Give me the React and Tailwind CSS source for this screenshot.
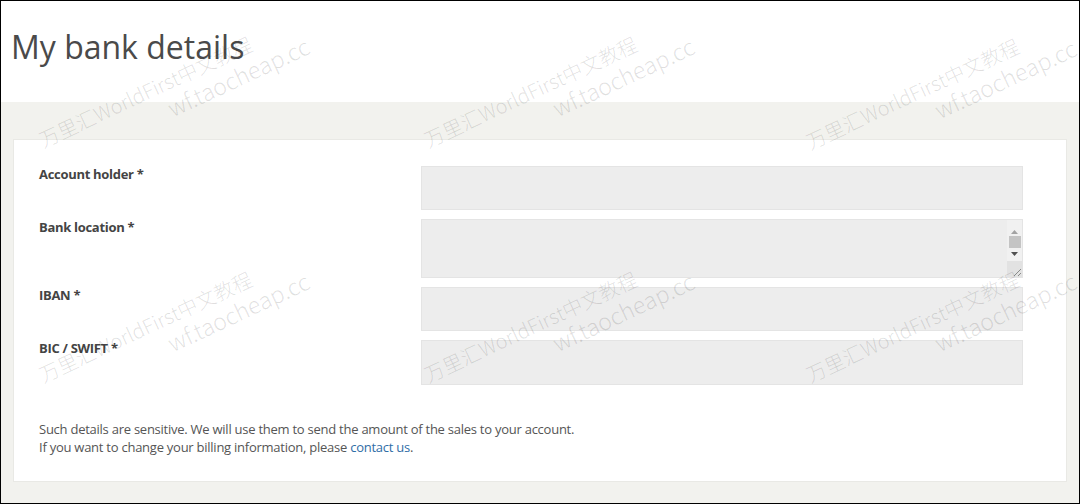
import React from 'react';

const fields = [
  { label: 'Account holder *', multiline: false, height: 'h-[44px]' },
  { label: 'Bank location *', multiline: true, height: 'h-[59px]' },
  { label: 'IBAN *', multiline: false, height: 'h-[44px]' },
  { label: 'BIC / SWIFT *', multiline: false, height: 'h-[45px]' },
];

// watermark tiles, baseline start of first line
const marks = [
  'left-[43px] top-[129px]',
  'left-[428px] top-[129px]',
  'left-[810px] top-[131px]',
  'left-[43px] top-[364px]',
  'left-[428px] top-[364px]',
  'left-[810px] top-[364px]',
];

const FakeScrollbar = () => (
  <div className="flex w-[15px] flex-col items-center bg-[#f1f1f1]">
    <div className="flex h-[16px] w-full items-end justify-center pb-[2px]">
      <svg width="7" height="4" viewBox="0 0 7 4">
        <path d="M3.5 0 L7 4 L0 4 Z" fill="#a3a3a3" />
      </svg>
    </div>
    <div className="h-[12px] w-[12px] bg-[#c4c4c4]" />
    <div className="flex h-[14px] w-full items-center justify-center">
      <svg width="7" height="4" viewBox="0 0 7 4">
        <path d="M0 0 L7 0 L3.5 4 Z" fill="#505050" />
      </svg>
    </div>
    <div className="mt-auto flex h-[16px] w-full items-end justify-end bg-[#e2e2e2]">
      <svg width="10" height="10" viewBox="0 0 10 10">
        <path d="M9 2 L2 9 M9 6 L6 9" stroke="#8a8a8a" strokeWidth="1" />
      </svg>
    </div>
  </div>
);

export default function App() {
  return (
    <div className="relative flex h-[504px] w-[1080px] flex-col overflow-hidden border border-black bg-white font-['Open_Sans',sans-serif]">
      {/* Header */}
      <div className="h-[101px] pl-[10px] pt-[27px]">
        <h1 className="text-[32px] font-normal leading-[38px] text-[#4a4a4a]">
          My bank details
        </h1>
      </div>

      {/* Body */}
      <div className="flex-1 bg-[#f2f2ee] pl-[12px] pr-[12px] pt-[37px]">
        <div className="border border-[#e9e9e5] bg-white pb-[25px] pl-[25px] pt-[26px]">
          <div className="grid grid-cols-[382px_602px] gap-y-[9px]">
            {fields.map((f) => (
              <React.Fragment key={f.label}>
                <label className="text-[13px] font-bold leading-[16px] tracking-[-0.3px] text-[#444]">
                  {f.label}
                </label>
                <div
                  className={`flex border border-[#e4e4e4] bg-[#ededed] ${f.height}`}
                >
                  <div className="flex-1" />
                  {f.multiline && <FakeScrollbar />}
                </div>
              </React.Fragment>
            ))}
          </div>

          <div className="mt-[35px] text-[13px] leading-[18px] tracking-[-0.25px] text-[#555]">
            <p>
              Such details are sensitive. We will use them to send the amount
              of the sales to your account.
            </p>
            <p>
              If you want to change your billing information, please{' '}
              <a href="#" className="text-[#2f6da6]">
                contact us
              </a>
              .
            </p>
          </div>
        </div>
      </div>

      {/* Watermark overlay */}
      <div className="pointer-events-none absolute inset-0">
        {marks.map((pos) => (
          <div
            key={pos}
            className={`absolute ${pos} origin-[0_19px] -rotate-[25deg] whitespace-nowrap font-['Noto_Sans_CJK_SC',sans-serif] font-light text-black/[0.12]`}
          >
            <div className="text-[20px] leading-none">万里汇WorldFirst中文教程</div>
            <div className="ml-[130px] mt-[4px] text-[23px] leading-none">
              wf.taocheap.cc
            </div>
          </div>
        ))}
      </div>
    </div>
  );
}
